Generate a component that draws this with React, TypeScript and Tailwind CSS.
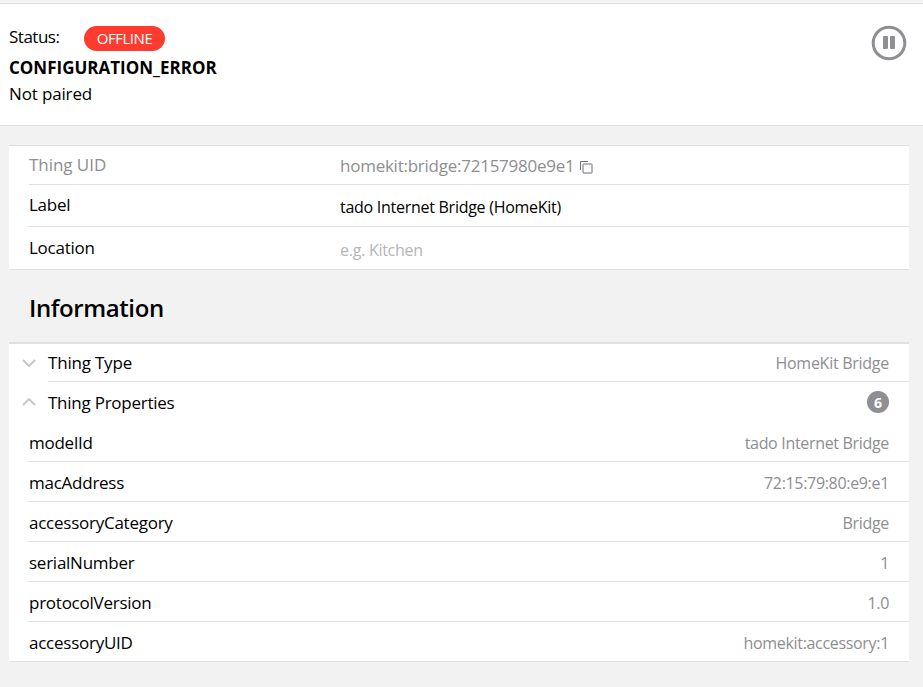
const font = "[font-family:'Open_Sans',sans-serif]";

const properties = [
  { name: "modelId", value: "tado Internet Bridge" },
  { name: "macAddress", value: "72:15:79:80:e9:e1" },
  { name: "accessoryCategory", value: "Bridge" },
  { name: "serialNumber", value: "1" },
  { name: "protocolVersion", value: "1.0" },
  { name: "accessoryUID", value: "homekit:accessory:1" },
];

const Chevron = ({ up }: { up?: boolean }) => (
  <svg width="14" height="8" viewBox="0 0 14 8" fill="none" stroke="#c7c7cc" strokeWidth="2">
    <path d={up ? "M1 7l6-6 6 6" : "M1 1l6 6 6-6"} />
  </svg>
);

const CopyIcon = () => (
  <svg width="14" height="14" viewBox="0 0 14 14" fill="none" stroke="#6d6d72" strokeWidth="1" className="ml-[4px] mt-[8px]">
    <path d="M1.5 10V1.5H9" />
    <rect x="4" y="4" width="9" height="9" rx="0.5" />
  </svg>
);

export default function App() {
  return (
    <div className={`${font} w-[923px] h-[687px] overflow-hidden bg-[#f2f2f2] pt-[3px] text-black`}>
      <div className="flex h-[123px] justify-between border-y border-[#e0e0e0] bg-white pl-[9px] pr-[16px] pt-[21px]">
        <div>
          <div className="flex h-[26px] items-center">
            <span className="mt-[-3px] w-[75px] text-[17px] tracking-[-0.5px]">Status:</span>
            <span className="flex h-[25px] w-[81px] items-center justify-center rounded-full bg-[#ff3b30] text-[15px] tracking-[-0.45px] text-white">
              OFFLINE
            </span>
          </div>
          <div className="mt-[4px] text-[17px] leading-[26px] font-bold">CONFIGURATION_ERROR</div>
          <div className="mt-[-1px] text-[17px] leading-[27px] tracking-[-0.15px]">Not paired</div>
        </div>
        <svg width="36" height="36" viewBox="0 0 36 36">
          <circle cx="18" cy="18" r="15.8" fill="none" stroke="#8e8e93" strokeWidth="3" />
          <rect x="12" y="11" width="5" height="13" rx="1" fill="#8e8e93" />
          <rect x="19" y="11" width="5" height="13" rx="1" fill="#8e8e93" />
        </svg>
      </div>

      <div className="ml-[9px] mt-[19px] w-[900px] border-y border-[#e0e0e0] bg-white pl-[20px]">
        <div className="flex h-[39px] border-b border-[#e0e0e0] pt-[6px]">
          <span className="w-[311px] text-[17px] leading-[26px] tracking-[-0.05px] text-[#8e8e93]">Thing UID</span>
          <span className="flex text-[17px] leading-[28px] tracking-[-0.25px] text-[#8e8e93]">
            homekit:bridge:72157980e9e1
            <CopyIcon />
          </span>
        </div>
        <div className="flex h-[42px] border-b border-[#e0e0e0] pt-[7px]">
          <span className="w-[311px] text-[17px] leading-[26px] tracking-[-0.25px]">Label</span>
          <span className="pt-[3px] text-[16px] leading-[24px] tracking-[-0.27px]">tado Internet Bridge (HomeKit)</span>
        </div>
        <div className="flex h-[42px] pt-[8px]">
          <span className="w-[311px] text-[17px] leading-[26px] tracking-[-0.25px]">Location</span>
          <span className="pt-[3px] text-[16px] leading-[24px] tracking-[-0.27px] text-[#b5b5b8]">e.g. Kitchen</span>
        </div>
      </div>

      <h2 className="ml-[29px] mt-[20px] h-[52px] text-[24px] leading-[36px] font-semibold tracking-[-0.4px]">Information</h2>

      <div className="ml-[9px] w-[900px] border-b border-t-2 border-[#e0e0e0] bg-white">
        <div className="flex h-[38px] items-center">
          <span className="ml-[13px] mr-[12px] flex w-[14px]">
            <Chevron />
          </span>
          <div className="flex h-full flex-1 items-center justify-between border-b border-[#e0e0e0] pr-[20px]">
            <span className="text-[17px] tracking-[-0.2px]">Thing Type</span>
            <span className="text-[16px] tracking-[-0.27px] text-[#8e8e93]">HomeKit Bridge</span>
          </div>
        </div>
        <div className="flex h-[40px] items-center">
          <span className="ml-[13px] mr-[12px] flex w-[14px]">
            <Chevron up />
          </span>
          <div className="flex flex-1 items-center justify-between pr-[20px]">
            <span className="pt-[2px] text-[17px] tracking-[-0.25px]">Thing Properties</span>
            <span className="flex size-[22px] items-center justify-center rounded-full bg-[#8e8e93] text-[14px] font-bold text-white">
              6
            </span>
          </div>
        </div>
        {properties.map((p, i) => (
          <div key={p.name} className="pl-[20px]">
            <div
              className={`flex items-center justify-between pr-[20px] pt-[2px] ${
                i < properties.length - 1 ? "h-[40px] border-b border-[#e0e0e0]" : "h-[39px]"
              }`}
            >
              <span className="text-[17px] tracking-[-0.25px]">{p.name}</span>
              <span className="text-[16px] tracking-[-0.32px] text-[#8e8e93]">{p.value}</span>
            </div>
          </div>
        ))}
      </div>
    </div>
  );
}
